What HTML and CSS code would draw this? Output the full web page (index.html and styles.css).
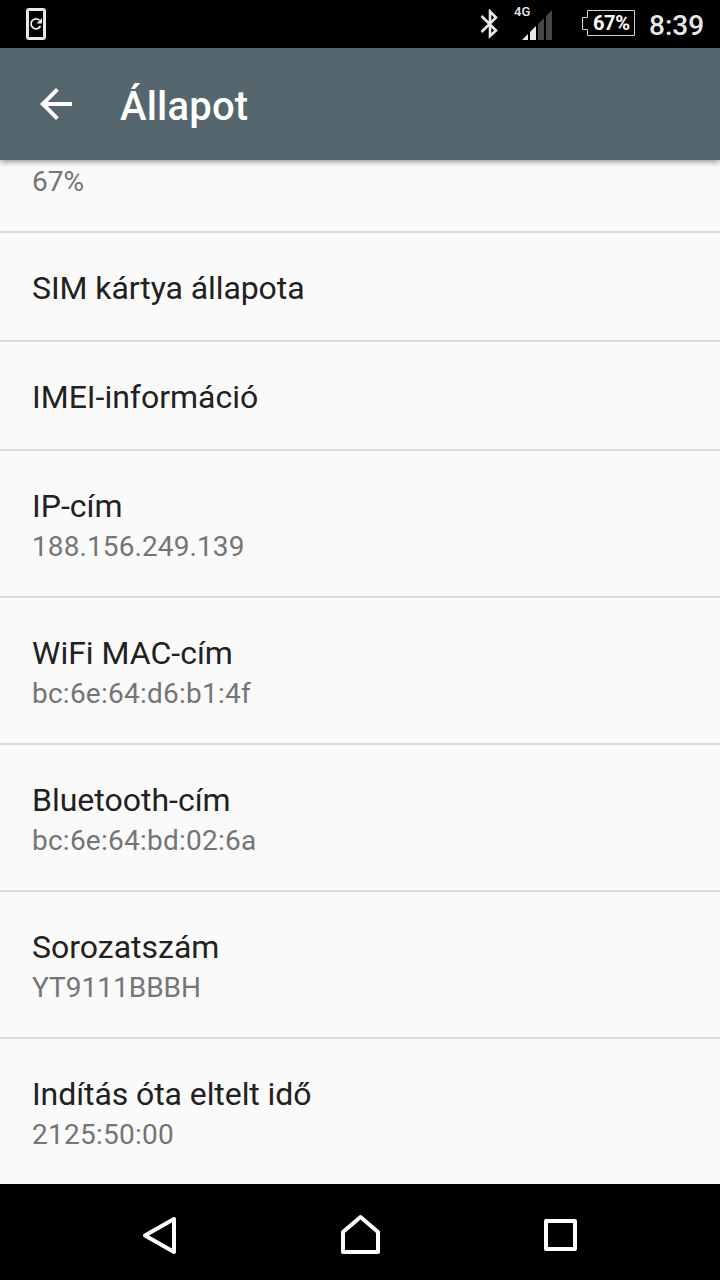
FILE: index.html
```html
<!DOCTYPE html>
<html lang="hu">
<head>
    <meta charset="UTF-8">
    <meta name="viewport" content="width=device-width, initial-scale=1.0">
    <title>Állapot</title>
    <link rel="stylesheet" href="styles.css">
</head>
<body>

    <!-- Status bar -->
    <div class="status-bar">
        <svg class="icon-update" width="22" height="32" viewBox="0 0 22 32">
            <rect x="1.5" y="1.5" width="17" height="29" rx="1.5" fill="none" stroke="#e8e8e8" stroke-width="3"/>
            <path d="M13.500 12.200A5 5 0 1 0 14.500 18" fill="none" stroke="#e8e8e8" stroke-width="1.8"/>
            <path d="M16 10v5.5h-5.5z" fill="#e8e8e8"/>
        </svg>
        <svg class="icon-bluetooth" width="20" height="30" viewBox="0 0 20 30">
            <path d="M1.5 7L16 21.5L10 27V2.5L16 8.5L1.5 23" fill="none" stroke="#e8e8e8" stroke-width="2.6"/>
        </svg>
        <span class="network">4G</span>
        <svg class="icon-signal" width="30" height="30" viewBox="0 0 30 30">
            <path d="M0 30L6 24V30z" fill="#e8e8e8"/>
            <path d="M8 22L14 16V30H8z" fill="#e8e8e8"/>
            <path d="M16 14L22 8V30H16z" fill="#464646"/>
            <path d="M24 6L30 0V30H24z" fill="#464646"/>
        </svg>
        <div class="battery">
            <svg width="53" height="27" viewBox="0 0 53 27">
                <path d="M5.5 .5H52.5V25.5H5.5V19.5H.5V7.5H5.5z" fill="none" stroke="#d0d0d0" stroke-width="1"/>
            </svg>
            <span class="battery-level">67%</span>
        </div>
        <span class="clock">8:39</span>
    </div>

    <!-- Toolbar -->
    <header class="toolbar">
        <svg class="icon-back" width="32" height="32" viewBox="0 0 32 32">
            <path d="M32 14H7.7L18.8 2.8L16 0L0 16L16 32L18.8 29.2L7.7 18H32z" fill="#fff"/>
        </svg>
        <h1>Állapot</h1>
    </header>

    <!-- Status list -->
    <main class="list">
        <div class="item item-cut">
            <p class="summary">67%</p>
        </div>
        <div class="item">
            <h2 class="tight">SIM kártya állapota</h2>
        </div>
        <div class="item">
            <h2>IMEI-információ</h2>
        </div>
        <div class="item">
            <h2>IP-cím</h2>
            <p class="summary digits">188.156.249.139</p>
        </div>
        <div class="item">
            <h2>WiFi MAC-cím</h2>
            <p class="summary address">bc:6e:64:d6:b1:4f</p>
        </div>
        <div class="item">
            <h2>Bluetooth-cím</h2>
            <p class="summary address">bc:6e:64:bd:02:6a</p>
        </div>
        <div class="item">
            <h2>Sorozatszám</h2>
            <p class="summary">YT9111BBBH</p>
        </div>
        <div class="item">
            <h2 class="tight">Indítás óta eltelt idő</h2>
            <p class="summary address">2125:50:00</p>
        </div>
    </main>

    <!-- Navigation bar -->
    <nav class="nav-bar">
        <svg width="200" height="96" viewBox="0 0 200 96">
            <path d="M114 35V68L85 51.5z" fill="none" stroke="#fff" stroke-width="4" stroke-linejoin="round"/>
        </svg>
        <svg width="200" height="96" viewBox="0 0 200 96">
            <path d="M83 68V48L100.500 33L118 48V68z" fill="none" stroke="#fff" stroke-width="4" stroke-linejoin="round"/>
        </svg>
        <svg width="200" height="96" viewBox="0 0 200 96">
            <rect x="86" y="37" width="29" height="28" fill="none" stroke="#fff" stroke-width="4" stroke-linejoin="round"/>
        </svg>
    </nav>

</body>
</html>
```
FILE: styles.css
```css
* {
    margin: 0;
    padding: 0;
    box-sizing: border-box;
}

body {
    width: 720px;
    height: 1280px;
    display: flex;
    flex-direction: column;
    overflow: hidden;
    font-family: Roboto, sans-serif;
    background-color: #fafafa;
}

svg {
    display: block;
    flex: none;
}

/* Status bar */
.status-bar {
    height: 48px;
    display: flex;
    align-items: flex-start;
    padding-left: 26px;
    background-color: #000;
    color: #e8e8e8;
}

.icon-update {
    margin-top: 8px;
}

.icon-bluetooth {
    margin: 9px 0 0 432px;
}

.network {
    width: 22px;
    margin: 4px 0 0 14px;
    font-size: 13px;
    font-weight: 500;
    line-height: 16px;
}

.icon-signal {
    margin: 10px 0 0 -14px;
}

.battery {
    position: relative;
    margin: 10px 0 0 30px;
}

.battery-level {
    position: absolute;
    top: 0;
    left: 11px;
    font-size: 20px;
    font-weight: 700;
    line-height: 27px;
    letter-spacing: -0.4px;
    color: #fff;
}

.clock {
    margin: 9px 0 0 14px;
    font-size: 28px;
    font-weight: 500;
    line-height: 34px;
}

/* Toolbar */
.toolbar {
    position: relative;
    height: 112px;
    display: flex;
    align-items: center;
    padding-left: 40px;
    background-color: #56666e;
    box-shadow: 0 2px 6px rgba(0, 0, 0, 0.4);
}

.toolbar h1 {
    margin: 6px 0 0 48px;
    font-size: 40px;
    font-weight: 500;
    line-height: 48px;
    letter-spacing: 0.2px;
    color: #fff;
}

/* List */
.list {
    height: 1024px;
}

.item {
    padding: 37px 32px 33px;
    border-top: 2px solid #dbdbdb;
}

.item-cut {
    padding-top: 6px;
    border-top: none;
}

.item h2 {
    font-size: 32px;
    font-weight: 400;
    line-height: 37px;
    color: #212121;
}

.item .tight {
    letter-spacing: -0.08px;
}

.summary {
    font-size: 28px;
    line-height: 32px;
    color: #757575;
}

.digits {
    letter-spacing: 0.1px;
}

.address {
    letter-spacing: 0.24px;
}

h2 + .summary {
    margin-top: 6px;
}

/* Navigation bar */
.nav-bar {
    height: 96px;
    display: flex;
    justify-content: center;
    background-color: #000;
}
```
